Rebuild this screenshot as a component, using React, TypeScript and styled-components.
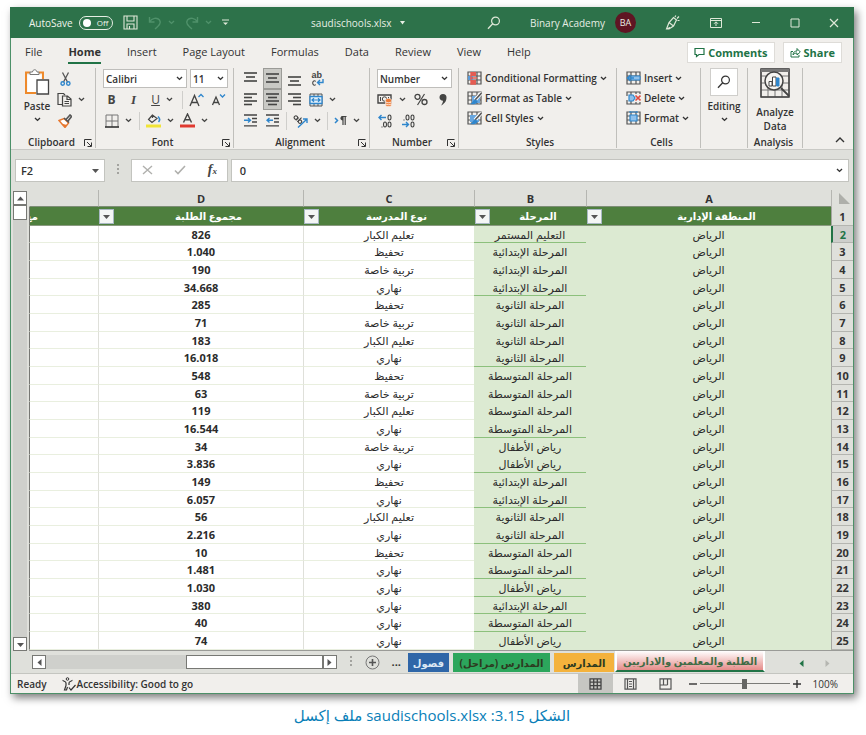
import React from "react";
import styled, { createGlobalStyle, css } from "styled-components";

const GlobalStyle = createGlobalStyle`
  * { box-sizing: border-box; }
  body { margin: 0; background: #fff; }
  body, button, input, select {
    font-family: "Open Sans", "Noto Sans", "DejaVu Sans", sans-serif;
    font-size: 11px;
    color: #333;
  }
  button, input, select { margin: 0; padding: 0; border: 0; background: none; outline: none; }
`;

const ink = "#444443";
const blue = "#2f86cc";
const green = "#217346";

/* ---------- page and window ---------- */

const Page = styled.main`
  padding: 7px 12px 4px 10px;
`;

const AppWindow = styled.section`
  border: 1px solid #4c9068;
  border-top: 0;
  background: #dfe0db;
  box-shadow: 3px 4px 8px rgba(0, 0, 0, 0.5);
`;

const Caption = styled.p`
  margin: 0;
  padding-top: 9px;
  text-align: center;
  font-size: 15px;
  line-height: 24px;
  font-weight: 500;
  color: #0a80b8;
`;

/* ---------- title bar ---------- */

const TitleBar = styled.header`
  display: flex;
  align-items: center;
  height: 31px;
  padding: 0 15px 0 19px;
  margin: 0 -1px;
  background: #2d724a;
  color: #e6eee4;
`;

const QuickAccess = styled.div`
  display: flex;
  align-items: center;
  gap: 10px;
  color: #e6eee4;
`;

const AutoSave = styled.button`
  display: flex;
  align-items: center;
  gap: 6px;
  font-size: 10px;
  font-weight: 500;
  color: #f0f4ec;
`;

const TogglePill = styled.span`
  display: flex;
  align-items: center;
  gap: 6px;
  height: 14px;
  width: 34px;
  padding-left: 3px;
  border: 1px solid #e6eee4;
  border-radius: 7px;
  font-size: 8px;

  &::before {
    content: "";
    width: 8px;
    height: 8px;
    border-radius: 50%;
    background: #fff;
  }
`;

const BarButton = styled.button<{ $dim?: boolean }>`
  display: flex;
  align-items: center;
  gap: 6px;
  color: ${(p) => (p.$dim ? "#4f916a" : "#dfe8d8")};
`;

const FileName = styled.button`
  flex: 1;
  display: flex;
  align-items: center;
  justify-content: center;
  gap: 8px;
  font-size: 10px;
  font-weight: 500;
  color: #e6eee4;
`;

const Account = styled.button`
  display: flex;
  align-items: center;
  gap: 10px;
  font-size: 10px;
  font-weight: 500;
  color: #e6eee4;
`;

const Avatar = styled.span`
  width: 21px;
  height: 21px;
  border-radius: 50%;
  background: #5f1523;
  font-size: 9px;
  line-height: 21px;
  text-align: center;
`;

const WindowTools = styled.div`
  display: flex;
  align-items: center;
  gap: 29px;
`;

/* ---------- ribbon ---------- */

const TabBar = styled.nav`
  display: flex;
  align-items: center;
  height: 28px;
  padding: 0 11px 0 14px;
  background: #f1efec;
`;

const Tab = styled.button<{ $active?: boolean }>`
  height: 24px;
  margin-right: 26px;
  border-bottom: 2px solid ${(p) => (p.$active ? green : "transparent")};
  font-weight: ${(p) => (p.$active ? 700 : 500)};
`;

const TabActions = styled.div`
  display: flex;
  gap: 8px;
  margin-left: auto;
`;

const ActionButton = styled.button`
  display: flex;
  align-items: center;
  gap: 3px;
  height: 21px;
  padding: 0 6px 0 6px;
  border: 1px solid #dedcd8;
  background: #fff;
  color: ${green};
  font-weight: 700;
`;

const Ribbon = styled.div`
  display: flex;
  align-items: flex-start;
  height: 84px;
  padding-top: 2px;
  border-bottom: 1px solid #c9c9c5;
  background: #f1efec;
`;

const Group = styled.section<{ $w: number; $pad?: number }>`
  display: flex;
  flex-direction: column;
  flex: 0 0 ${(p) => p.$w}px;
  height: 80px;
  padding-left: ${(p) => p.$pad ?? 8}px;
  border-right: 1px solid #c0bfbb;
`;

const GroupBody = styled.div`
  flex: 1;
  display: flex;
  align-items: flex-start;
`;

const GroupFooter = styled.footer`
  display: flex;
  align-items: center;
  justify-content: space-between;
  height: 12px;
  padding-right: 3px;
  font-size: 10px;
  font-weight: 600;
`;

const GroupName = styled.span`
  flex: 1;
  text-align: center;
`;

const Stack = styled.div`
  display: flex;
  flex-direction: column;
`;

const ToolRow = styled.div<{ $gap?: number }>`
  display: flex;
  align-items: center;
  gap: ${(p) => p.$gap ?? 4}px;
  height: 21px;
`;

const Tool = styled.button<{ $on?: boolean; $w?: number }>`
  display: flex;
  align-items: center;
  justify-content: center;
  gap: 6px;
  height: 21px;
  min-width: ${(p) => p.$w ?? 17}px;
  color: ${ink};
  ${(p) =>
    p.$on &&
    css`
      border: 1px solid #9b9b97;
      background: #c9c9c5;
    `}
`;

const Glyph = styled.span<{ $kind: "bold" | "italic" | "underline" }>`
  font-size: 12px;
  line-height: 16px;
  ${(p) => p.$kind === "bold" && "font-weight: 700;"}
  ${(p) => p.$kind === "italic" && 'font-style: italic; font-family: "Liberation Serif", serif; font-size: 13px; font-weight: 700;'}
  ${(p) => p.$kind === "underline" && "text-decoration: underline;"}
`;

const Divider = styled.i`
  width: 1px;
  height: 18px;
  background: #cfcecb;
`;

const BigTool = styled.button<{ $w?: number }>`
  display: flex;
  flex-direction: column;
  align-items: center;
  width: ${(p) => p.$w ?? 32}px;
  line-height: 14px;
  font-size: 10px;
  font-weight: 600;

  > :first-child { margin-bottom: 3px; }
  > :last-child:not(:first-child) { margin-top: 4px; }
`;

const IconFrame = styled.span`
  display: flex;
  align-items: center;
  justify-content: center;
  width: 28px;
  height: 28px;
  border: 1px solid #cfcecb;
  background: #fff;
`;

const TextTool = styled.button`
  display: flex;
  align-items: center;
  gap: 3px;
  height: 20px;
  font-size: 10px;
  font-weight: 600;
  white-space: nowrap;
`;

const SelectBox = styled.label<{ $w: number }>`
  position: relative;
  display: block;
  width: ${(p) => p.$w}px;
  height: 19px;
  border: 1px solid #bfbebb;
  background: #fff;

  select {
    width: 100%;
    height: 100%;
    padding-left: 2px;
    appearance: none;
    font-size: 10px;
    font-weight: 600;
  }
  svg {
    position: absolute;
    right: 3px;
    top: 6px;
    pointer-events: none;
  }
`;

const CollapseButton = styled.button`
  align-self: flex-end;
  margin: 0 8px 3px auto;
`;

/* ---------- formula bar ---------- */

const FormulaBar = styled.div`
  display: flex;
  align-items: center;
  height: 40px;
  padding: 0 4px;
`;

const Field = styled.label<{ $w?: number }>`
  display: flex;
  align-items: center;
  ${(p) => (p.$w ? `flex: 0 0 ${p.$w}px;` : "flex: 1;")}
  min-width: 0;
  height: 23px;
  padding: 0 5px;
  border: 1px solid #c3c4bf;
  background: #fff;

  input {
    flex: 1;
    width: 0;
    min-width: 0;
    font-weight: 600;
  }
`;

const FormulaTools = styled.div`
  display: flex;
  align-items: center;
  justify-content: space-between;
  flex: 0 0 97px;
  height: 23px;
  margin-right: 3px;
  padding: 0 10px;
  border: 1px solid #c3c4bf;
  background: #fff;
`;

const GripDots = styled.span<{ $gap: number }>`
  width: 2px;
  height: 12px;
  margin: 0 ${(p) => p.$gap}px;
  background: repeating-linear-gradient(#a3a39f 0 2px, transparent 2px 4px);
`;

/* ---------- sheet ---------- */

const SheetArea = styled.div`
  display: flex;
`;

const VerticalScroll = styled.div`
  display: flex;
  flex-direction: column;
  flex: 0 0 14px;
  margin: 1px 2px 0;
  background: #cfd0cc;
`;

const ScrollButton = styled.button`
  display: flex;
  align-items: center;
  justify-content: center;
  width: 14px;
  height: 14px;
  border: 1px solid #777874;
  background: #fff;
`;

const VerticalThumb = styled.div`
  width: 14px;
  height: 15px;
  margin-bottom: auto;
  border: 1px solid #777874;
  background: #fff;
`;

const Sheet = styled.table`
  flex: 1;
  width: 100%;
  table-layout: fixed;
  border-collapse: separate;
  border-spacing: 0;
  border-bottom: 1px solid #9a9b97;
  line-height: 15px;
  text-align: center;
`;

const LetterCell = styled.th`
  height: 17px;
  padding: 0;
  border-left: 1px solid #b5b6b1;
  border-bottom: 1px solid #7d8d76;
  font-size: 11px;
  font-weight: 700;

  &:last-child { border-left-color: transparent; }
`;

const Corner = styled.th`
  padding: 0 3px 0 0;
  border-left: 1px solid #b5b6b1;
  svg { display: block; }
`;

const HeadRow = styled.tr`
  height: 19px;
`;

const HeadCell = styled.th`
  padding: 0;
  border-bottom: 1px solid #8a9a80;
  background: #4e7f3e;
  font-size: 10px;
  color: #fff;
  overflow: hidden;
  white-space: nowrap;
  &:last-child { border-left: 1px solid #777874; }
`;

const HeadContent = styled.div<{ $cut?: boolean }>`
  display: flex;
  align-items: center;
  height: 17px;
  padding-left: 1px;
  ${(p) => p.$cut && "padding-right: 60px;"}

  span { flex: 1; }
`;

const FilterButton = styled.button`
  display: flex;
  align-items: center;
  justify-content: center;
  width: 15px;
  height: 15px;
  border: 1px solid #a9b8c4;
  background: #f4f6f5;
`;

const DataRow = styled.tr`
  height: 18px;
  &:nth-child(3n + 1) { height: 17px; }
`;

const RowNumber = styled.th<{ $selected?: boolean }>`
  padding: 0;
  border-left: 1px solid #a5a6a1;
  border-bottom: 1px solid #b4b5b0;
  font-size: 11px;
  font-weight: 700;
  color: #333;
  ${(p) =>
    p.$selected &&
    css`
      border-left: 2px solid ${green};
      background: #cdcecb;
      color: ${green};
    `}
`;

const Cell = styled.td<{ $tone?: "region" | "stage"; $rule?: boolean }>`
  padding: 0;
  border-left: 1px solid #dfe0da;
  border-bottom: 1px solid #e9efdf;
  background: #fff;
  color: #2b2b2b;
  overflow: hidden;
  white-space: nowrap;
  ${(p) =>
    p.$tone &&
    css`
      border-left: 0;
      border-bottom-color: ${p.$rule ? "#8cc07c" : "#dcead2"};
      background: #dcead2;
    `}
  &:last-child { border-left-color: #777874; }
`;

const NumberCell = styled(Cell)`
  font-weight: 700;
`;

/* ---------- bottom bars ---------- */

const SheetBar = styled.div`
  display: flex;
  align-items: center;
  height: 23px;
  padding-left: 21px;
  border-bottom: 1px solid #c4c5c0;
`;

const HorizontalScroll = styled.div`
  display: flex;
  flex: 1;
  justify-content: flex-end;
  height: 14px;
  background: #cfd0cc;

  > :first-child { margin-right: auto; }
`;

const HorizontalThumb = styled.div`
  width: 137px;
  border: 1px solid #777874;
  background: #fff;
`;

const AddSheet = styled.button`
  display: flex;
`;

const More = styled.span`
  margin: 0 7px 0 12px;
  font-weight: 700;
  line-height: 14px;
`;

const SheetTabs = styled.div`
  display: flex;
  align-self: stretch;
  align-items: flex-start;
`;

const SheetTab = styled.button<{ $w: number; $bg: string; $fg?: string; $active?: boolean }>`
  width: ${(p) => p.$w}px;
  height: 19px;
  margin-top: 2px;
  margin-right: 4px;
  white-space: nowrap;
  background: ${(p) => p.$bg};
  color: ${(p) => p.$fg ?? "#2d3a20"};
  font-size: 10px;
  font-weight: 700;

  &:nth-last-child(2) { margin-right: 1px; }
  ${(p) =>
    p.$active &&
    css`
      height: 21px;
      margin-top: 0;
      margin-right: 0;
      border: solid #fff;
      border-width: 0 2px;
      border-bottom: 2px solid ${green};
    `}
`;

const TabArrows = styled.div`
  display: flex;
  gap: 19px;
  margin: 0 22px 0 33px;
`;

const StatusBar = styled.footer`
  display: flex;
  align-items: center;
  height: 19px;
  padding: 0 15px 0 6px;
  background: #f1efec;
  font-size: 10px;
  font-weight: 600;
`;

const StatusButton = styled.button`
  display: flex;
  align-items: center;
  gap: 1px;
  margin-left: 15px;
  font-size: 10px;
  font-weight: 600;
`;

const ViewModes = styled.div`
  display: flex;
  align-self: stretch;
  margin-left: auto;
`;

const ViewMode = styled.button<{ $on?: boolean }>`
  display: flex;
  align-items: center;
  justify-content: center;
  width: 35px;
  background: ${(p) => (p.$on ? "#c6c6c2" : "transparent")};
`;

const ZoomControl = styled.div`
  display: flex;
  align-items: center;
  gap: 3px;
  margin-left: 6px;
  font-weight: 400;

  button { display: flex; }
`;

const ZoomSlider = styled.input`
  width: 90px;
  height: 12px;
  appearance: none;
  background: linear-gradient(#7b7b78, #7b7b78) center / 100% 1px no-repeat;

  &::-webkit-slider-thumb {
    appearance: none;
    width: 5px;
    height: 10px;
    background: #666663;
  }
`;

const ZoomValue = styled.output`
  margin-left: 9px;
`;

/* ---------- icons ---------- */

const Svg = ({ w, h, children }: { w: number; h: number; children: React.ReactNode }) => (
  <svg width={w} height={h} viewBox={`0 0 ${w} ${h}`} fill="none" stroke="currentColor" aria-hidden="true">
    {children}
  </svg>
);

const Chevron = () => (
  <Svg w={7} h={5}>
    <path d="M1 1l2.5 2.4L6 1" strokeWidth="1.4" />
  </Svg>
);

const Triangle = ({ dir = "down", color = "#555" }: { dir?: "down" | "up" | "left" | "right"; color?: string }) => {
  const d = {
    down: "M0 2h7L3.500 6z",
    up: "M0 5.500h7L3.500 1.500z",
    left: "M5.500 0v7L1.500 3.500z",
    right: "M1.500 0v7L5.500 3.500z",
  }[dir];
  return (
    <Svg w={7} h={7}>
      <path d={d} fill={color} stroke="none" />
    </Svg>
  );
};

const SmallTriangle = () => (
  <Svg w={5} h={4}>
    <path d="M0 0h5L2.500 3.500z" fill="currentColor" stroke="none" />
  </Svg>
);

const SaveIcon = () => (
  <Svg w={15} h={15}>
    <path d="M1 1h13v13H1zM4 1v5h7V1M4 14V9h7v5M6.500 11v3" strokeWidth="1.100" />
  </Svg>
);

const UndoIcon = ({ flip }: { flip?: boolean }) => (
  <Svg w={14} h={14}>
    <g transform={flip ? "translate(14 0) scale(-1 1)" : undefined} strokeWidth="1.400">
      <path d="M1.500 1v5h5M1.500 6C4 2 9 1 11.500 4c2 3 0 5-4.500 9" />
    </g>
  </Svg>
);

const CustomizeIcon = () => (
  <Svg w={7} h={7}>
    <path d="M0 1h7" />
    <path d="M1 3.500h5L3.500 6z" fill="currentColor" stroke="none" />
  </Svg>
);

const SearchIcon = () => (
  <Svg w={14} h={14}>
    <circle cx="8.500" cy="5" r="3.900" strokeWidth="1.200" />
    <path d="M5.700 7.800L1 12.800" strokeWidth="1.300" />
  </Svg>
);

const PenIcon = () => (
  <Svg w={16} h={16}>
    <path d="M1.500 14L4 7.500 8.500 2.500l3 2.500-3 6-4.500 3zM4 7.500l4.500 3.500M1.500 14l3.500-1.500M10 2l.8-1.500M12 3.500l2-2M12.500 5.500h2" strokeWidth="1.200" />
  </Svg>
);

const RibbonIcon = () => (
  <Svg w={12} h={10}>
    <path d="M.5.500h11v9H.500zM.5 2.500h11M6 8V4M4 5.800l2-2 2 2" />
  </Svg>
);

const MinimizeIcon = () => (
  <Svg w={10} h={10}>
    <path d="M1 4.500h8" />
  </Svg>
);

const MaximizeIcon = () => (
  <Svg w={10} h={10}>
    <path d="M1 1h8v8H1z" />
  </Svg>
);

const CloseIcon = () => (
  <Svg w={10} h={10}>
    <path d="M1 1l8 8M9 1L1 9" strokeWidth="1.200" />
  </Svg>
);

const CommentIcon = () => (
  <Svg w={11} h={11}>
    <path d="M1 1.500h9v6H5l-2.500 2v-2H1z" strokeWidth="1.200" />
  </Svg>
);

const ShareIcon = () => (
  <Svg w={11} h={11}>
    <path d="M3 4.500H1v5.500h8V8M3 8c0-3 2-4 4-4V1.500L10.300 5 7 8V6C5.500 6 4 6.500 3 8z" />
  </Svg>
);

const PasteIcon = () => (
  <Svg w={26} h={28}>
    <path d="M6 4.500H2V25h10M15 4.500h4V11" stroke="#ee8a2c" strokeWidth="2" />
    <path d="M6 6.500V4h2.500c.3-3 4-3 4.500 0H15v2.500z" stroke="#777" fill="#fff" />
    <path d="M3.500 7h14v5h-5v12h-9z" fill="#fff" stroke="none" />
    <path d="M13 12h11.500v14H13z" fill="#fff" stroke="#444" strokeWidth="1.300" />
  </Svg>
);

const CutIcon = () => (
  <Svg w={11} h={14}>
    <path d="M2.500.500L7.500 10M8.500.500L3.500 10" stroke="#555" strokeWidth="1.300" />
    <circle cx="2.700" cy="11.500" r="1.700" stroke={blue} strokeWidth="1.400" />
    <circle cx="8.300" cy="11.500" r="1.700" stroke={blue} strokeWidth="1.400" />
  </Svg>
);

const CopyIcon = () => (
  <Svg w={15} h={15}>
    <path d="M5 12.500H1v-11h5.500l1.500 1.500" strokeWidth="1.200" />
    <path d="M5.500 4h5L14 7v7H5.500zM10 4v3.500h4M7.500 9.500h4.500M7.500 11.500h4.500" strokeWidth="1.200" />
  </Svg>
);

const BrushIcon = () => (
  <Svg w={14} h={14}>
    <path d="M1 6.500l5-2 4.500 4.500-3.500 4.500z" fill="#fff" stroke="#e8772e" strokeWidth="1.400" />
    <path d="M3 9.500l4 3.500 2-2z" fill="#e8772e" stroke="none" />
    <path d="M6 4l5 4.500M8 5.500L12 1l1.500 1.500L10 7" stroke="#555" strokeWidth="1.600" />
  </Svg>
);

const BordersIcon = () => (
  <Svg w={14} h={14}>
    <path d="M1 1h12v12M1 1v12M7 1v12M1 7h12" stroke="#777" />
    <path d="M0 13h14" stroke="#333" strokeWidth="1.600" />
  </Svg>
);

const FillIcon = () => (
  <Svg w={15} h={15}>
    <path d="M6.500 2L2.500 6.500 6 9.500l5-4zM6.500 5V1.500" strokeWidth="1.200" />
    <path d="M12 3.500c2 2 2 4 .5 5.500" stroke={blue} strokeWidth="1.600" />
    <path d="M0 11.500h15v3H0z" fill="#f0e436" stroke="none" />
  </Svg>
);

const FontColorIcon = () => (
  <Svg w={15} h={15}>
    <path d="M3.500 9.500L7.500 1l4 8.500M5 6.800h5" strokeWidth="1.400" />
    <path d="M0 11.500h15v3H0z" fill="#e03a30" stroke="none" />
  </Svg>
);

const GrowIcon = ({ down }: { down?: boolean }) => (
  <Svg w={15} h={14}>
    <path d={down ? "M1.500 12L5 4l3.500 8M2.700 9.500h4.600" : "M1 13L5.500 2.500 10 13M2.500 9.500h6"} strokeWidth="1.300" />
    <path d={down ? "M9 1.500l2.500 2.500L14 1.500" : "M9.500 4L12 1.500 14.500 4"} stroke={blue} strokeWidth="1.300" />
  </Svg>
);

const lineSets = {
  top: { y: 1, w: [[0, 13], [2, 9], [0, 13]] },
  middle: { y: 2, w: [[0, 13], [2, 9], [0, 13]] },
  bottom: { y: 5, w: [[0, 13], [2, 9], [0, 13]] },
  left: { y: 1, w: [[0, 13], [0, 8], [0, 13], [0, 8]] },
  center: { y: 1, w: [[0, 13], [2, 9], [0, 13], [2, 9]] },
  right: { y: 1, w: [[0, 13], [5, 8], [0, 13], [5, 8]] },
};

const LinesIcon = ({ kind }: { kind: keyof typeof lineSets }) => (
  <Svg w={13} h={14}>
    {lineSets[kind].w.map(([x, w], i) => (
      <path key={i} d={`M${x} ${lineSets[kind].y + i * (lineSets[kind].w.length === 3 ? 4 : 3.500)}h${w}`} strokeWidth="1.600" />
    ))}
  </Svg>
);

const IndentIcon = ({ back }: { back?: boolean }) => (
  <Svg w={13} h={13}>
    <path d="M0 1h13M8 4.500h5M8 8h5M0 11.800h13" strokeWidth="1.300" />
    <path d={back ? "M7 6.300H1M3.500 4L1 6.300l2.500 2.300" : "M0 6.300h6M4 4l2.500 2.300L4 8.600"} stroke={blue} strokeWidth="1.400" />
  </Svg>
);

const WrapMark = styled.span`
  display: grid;
  grid-template-columns: auto auto;
  align-items: center;
  width: 13px;
  font: 600 9px/8px "Liberation Sans", sans-serif;
  text-align: left;

  b { grid-column: 1 / -1; font-weight: 600; }
`;

const WrapIcon = () => (
  <WrapMark>
    <b>ab</b>
    <Svg w={4} h={8}>
      <path d="M3.800 2.500C2.500 1 .700 2 .700 4s1.800 3 3.100 1.500" strokeWidth="1.100" />
    </Svg>
    <Svg w={8} h={8}>
      <path d="M7 0v3.500H1.500M4 1L1.500 3.500 4 6" stroke={blue} strokeWidth="1.400" />
    </Svg>
  </WrapMark>
);

const MergeIcon = () => (
  <Svg w={14} h={14}>
    <path d="M1 1h12v12H1zM5 1v3M9 1v3M5 10v3M9 10v3" stroke="#555" />
    <path d="M1 3.500h12v7H1z" fill="#e4f0fa" stroke={blue} strokeWidth="1.300" />
    <path d="M3 7h8M5 5.300L3 7l2 1.700M9 5.300L11 7 9 8.700" stroke={blue} strokeWidth="1.200" />
  </Svg>
);

const RotateIcon = () => (
  <Svg w={15} h={14}>
    <g transform="rotate(45 5 5)" strokeWidth="1.100">
      <circle cx="2.500" cy="5.500" r="1.700" />
      <path d="M4.400 3.500v4M6.500 1.500v6" />
      <circle cx="8.300" cy="5.500" r="1.700" />
    </g>
    <path d="M5 13.500l8.500-8M10 5h4v4" stroke={blue} strokeWidth="1.400" />
  </Svg>
);

const DirectionIcon = () => (
  <Svg w={13} h={11}>
    <path d="M1 3l2.500 2.500L1 8" stroke={blue} strokeWidth="1.500" />
    <path d="M12.500 1.500H7.500M9 1.500V10M11.200 1.500V10" strokeWidth="1.200" />
    <path d="M9 1C5.500 1 5.500 5.500 9 5.500z" fill="currentColor" stroke="none" />
  </Svg>
);

const MoneyIcon = () => (
  <Svg w={16} h={14}>
    <path d="M1 2h13v8H1z" strokeWidth="1.400" />
    <circle cx="7.500" cy="6" r="2.200" />
    <path d="M3.500 4v4M11.500 4v2" />
    <path d="M8.500 7c0-2 6-2 6 0v5c0 2-6 2-6 0z" fill="#ee7a35" stroke="#fff" strokeWidth=".6" />
    <path d="M9 9c1 1 4 1 5 0M9 11c1 1 4 1 5 0" stroke="#fff" strokeWidth=".8" />
  </Svg>
);

const PercentIcon = () => (
  <Svg w={14} h={13}>
    <circle cx="3.500" cy="3.800" r="2.500" strokeWidth="1.300" />
    <circle cx="10.500" cy="9" r="2.500" strokeWidth="1.300" />
    <path d="M10.500 1L3.500 12" strokeWidth="1.200" />
  </Svg>
);

const CommaIcon = () => (
  <Svg w={8} h={12}>
    <path d="M.5 3.500a3.300 3.300 0 0 1 7 0c0 4-2.500 6.500-5.500 8 1-1.500 2-3 2-4.800-2 0-3.500-1.200-3.500-3.200z" fill="currentColor" stroke="none" />
  </Svg>
);

const DecimalIcon = ({ less }: { less?: boolean }) => (
  <Svg w={15} h={14}>
    <g strokeWidth="1.100">
      {less && <ellipse cx="6.500" cy="3.500" rx="1.500" ry="2.500" />}
      <ellipse cx="11.500" cy="3.500" rx="1.500" ry="2.500" />
      {!less && <ellipse cx="7" cy="10.500" rx="1.500" ry="2.500" />}
      <ellipse cx="11.500" cy="10.500" rx="1.500" ry="2.500" />
      <path d={less ? "M3 5.500v1" : "M4 12.500v1"} />
    </g>
    <path d={less ? "M1 10.500h6.500M5 8l2.500 2.500L5 13" : "M8 3.500H1M3.500 1L1 3.500 3.500 6"} stroke={blue} strokeWidth="1.400" />
  </Svg>
);

const GridBase = () => <path d="M1 1h13v12H1zM1 5h13M1 9h13M5 1v12M10 1v12" stroke="#555" strokeWidth="1.200" />;

const CondIcon = () => (
  <Svg w={15} h={14}>
    <GridBase />
    <path d="M4 1h5v4H4zM4 9h5v4H4z" fill="#e45c52" stroke="none" />
    <path d="M1 5h5v4H1z" fill="#5b9bd8" stroke="none" />
    <path d="M4 7h6M4 1v12h5" stroke="#e45c52" strokeWidth="1.400" />
  </Svg>
);

const PaintOverlay = () => (
  <>
    <path d="M14.500 2L8 9" stroke="#fff" strokeWidth="3.500" />
    <path d="M14.500 2L8 9" stroke="#555" strokeWidth="1.600" />
    <path d="M9 8.500c-3 0-3 3-6 4.500 4 .6 8 0 7.500-3z" fill={blue} stroke="none" />
  </>
);

const TableFormatIcon = () => (
  <Svg w={15} h={14}>
    <GridBase />
    <path d="M5 5h8v7H5z" fill="#68a6df" stroke="none" />
    <PaintOverlay />
  </Svg>
);

const CellStyleIcon = () => (
  <Svg w={15} h={14}>
    <GridBase />
    <path d="M3 4h9v7H3z" fill="#68a6df" stroke="none" />
    <PaintOverlay />
  </Svg>
);

const InsertIcon = () => (
  <Svg w={15} h={14}>
    <GridBase />
    <path d="M5 5h9v4H5z" fill="#8fc0ea" stroke={blue} />
    <path d="M8 7H1.500M4.500 4L1.500 7l3 3" stroke={blue} strokeWidth="1.500" />
  </Svg>
);

const DeleteIcon = () => (
  <Svg w={15} h={14}>
    <path d="M1 5V1h13v2M1 9v4h13v-2M5 1v3M10 1v2M5 10v3M10 11v2" stroke="#555" strokeWidth="1.200" />
    <path d="M3 4h4l2 3-2 3H3z" fill="#8fc0ea" stroke={blue} strokeWidth="1.200" />
    <path d="M9.500 4.500l5 5M14.500 4.500l-5 5" stroke="#e04a40" strokeWidth="1.600" />
  </Svg>
);

const FormatIcon = () => (
  <Svg w={15} h={14}>
    <GridBase />
    <path d="M4 4h7v6H4z" fill="#8fc0ea" stroke={blue} strokeWidth="1.200" />
    <path d="M4 0v2M11 0v2M4 1h7" stroke={blue} />
  </Svg>
);

const AnalyzeIcon = () => (
  <Svg w={30} h={30}>
    <path d="M1 1h28v28H1zM1 8h28M1 15h28M1 22h28M8 8v21M15 8v21M22 8v21" stroke="#777" />
    <path d="M1 1h28v28H1z" stroke="#444" strokeWidth="1.500" />
    <path d="M1 1h28v3H1z" fill="#777" stroke="none" />
    <circle cx="14" cy="13" r="9" fill="#f6f5f2" stroke="#444" strokeWidth="1.500" />
    <path d="M9 13.500h3V18H9zM12.500 9h3.500v9h-3.500z" fill="#fff" stroke="#444" />
    <path d="M16.500 10h2.500v8h-2.500z" fill={blue} stroke={blue} />
    <path d="M21 20l8 8" stroke="#444" strokeWidth="1.800" />
  </Svg>
);

const LauncherIcon = () => (
  <Svg w={8} h={8}>
    <path d="M.5 7V.500h7M3 3l4 4M7.500 3.500v4h-4" />
  </Svg>
);

const CollapseIcon = () => (
  <Svg w={10} h={6}>
    <path d="M1 5l4-4 4 4" strokeWidth="1.400" />
  </Svg>
);

const CancelIcon = () => (
  <Svg w={11} h={10}>
    <path d="M1 1l9 8M10 1L1 9" stroke="#b0b0ad" strokeWidth="1.400" />
  </Svg>
);

const CheckIcon = () => (
  <Svg w={12} h={10}>
    <path d="M1 5.500l3 3L11 1" stroke="#b0b0ad" strokeWidth="1.600" />
  </Svg>
);

const FxLabel = styled.span`
  font: italic 700 14px/16px "Liberation Serif", serif;
  color: #444;
  small { font-size: 9px; }
`;

const AddIcon = () => (
  <Svg w={15} h={15}>
    <circle cx="7.500" cy="7.500" r="6.500" stroke="#777" />
    <path d="M7.500 4v7M4 7.500h7" stroke="#555" strokeWidth="1.600" />
  </Svg>
);

const AccessibilityIcon = () => (
  <Svg w={14} h={14}>
    <circle cx="5.500" cy="2" r="1.300" />
    <path d="M1 3c-.5 1.500 3 1 3 3v2.500L2.500 13h2L5.500 10M10 3c.5 1.500-3 1-3 3v2M7 10.500l2 2.500 4.500-5" strokeWidth="1.200" />
  </Svg>
);

const NormalViewIcon = () => (
  <Svg w={13} h={12}>
    <path d="M1 .800h11v10.400H1zM1 4.200h11M1 7.700h11M4.700 1v10M8.300 1v10" stroke="#444" strokeWidth="1.300" />
  </Svg>
);

const PageViewIcon = () => (
  <Svg w={13} h={12}>
    <path d="M1 .800h11v10.400H1zM3.500 1v10M9.500 1v10M5 3.500h3M5 6h3M5 8.500h3" stroke="#555" strokeWidth="1.200" />
  </Svg>
);

const BreakViewIcon = () => (
  <Svg w={13} h={12}>
    <path d="M1 .800h11v10.400H1zM4.500 1v6M8.500 1v6M1 7h7.500" stroke="#555" strokeWidth="1.200" />
  </Svg>
);

/* ---------- data ---------- */

const primary = "المرحلة الإبتدائية";
const secondary = "المرحلة الثانوية";
const middle = "المرحلة المتوسطة";
const kinder = "رياض الأطفال";
const day = "نهاري";
const memorize = "تحفيظ";
const special = "تربية خاصة";
const adults = "تعليم الكبار";

const records: [string, string, string][] = [
  ["التعليم المستمر", adults, "826"],
  [primary, memorize, "1.040"],
  [primary, special, "190"],
  [primary, day, "34.668"],
  [secondary, memorize, "285"],
  [secondary, special, "71"],
  [secondary, adults, "183"],
  [secondary, day, "16.018"],
  [middle, memorize, "548"],
  [middle, special, "63"],
  [middle, adults, "119"],
  [middle, day, "16.544"],
  [kinder, special, "34"],
  [kinder, day, "3.836"],
  [primary, memorize, "149"],
  [primary, day, "6.057"],
  [secondary, adults, "56"],
  [secondary, day, "2.216"],
  [middle, memorize, "10"],
  [middle, day, "1.481"],
  [kinder, day, "1.030"],
  [primary, day, "380"],
  [middle, day, "40"],
  [kinder, day, "74"],
];

const headings = ["المنطقة الإدارية", "المرحلة", "نوع المدرسة", "مجموع الطلبة"];
const tabs = ["File", "Home", "Insert", "Page Layout", "Formulas", "Data", "Review", "View", "Help"];

const Footer = ({ name, launcher }: { name: string; launcher?: boolean }) => (
  <GroupFooter>
    <GroupName>{name}</GroupName>
    {launcher && (
      <button aria-label={`${name} settings`}>
        <LauncherIcon />
      </button>
    )}
  </GroupFooter>
);

const Dropdown = ({ label, value, w }: { label: string; value: string; w: number }) => (
  <SelectBox $w={w}>
    <select aria-label={label} defaultValue={value}>
      <option>{value}</option>
    </select>
    <Chevron />
  </SelectBox>
);

export default function App() {
  return (
    <Page>
      <GlobalStyle />
      <AppWindow>
        <TitleBar>
          <QuickAccess>
            <AutoSave role="switch" aria-checked="false">
              AutoSave
              <TogglePill>Off</TogglePill>
            </AutoSave>
            <BarButton aria-label="Save"><SaveIcon /></BarButton>
            <BarButton $dim aria-label="Undo"><UndoIcon /><Chevron /></BarButton>
            <BarButton $dim aria-label="Redo"><UndoIcon flip /><Chevron /></BarButton>
            <BarButton aria-label="Customize toolbar"><CustomizeIcon /></BarButton>
          </QuickAccess>
          <FileName>
            saudischools.xlsx
            <SmallTriangle />
          </FileName>
          <WindowTools>
            <BarButton aria-label="Search"><SearchIcon /></BarButton>
            <Account>
              Binary Academy
              <Avatar>BA</Avatar>
            </Account>
            <BarButton aria-label="Drawing"><PenIcon /></BarButton>
            <BarButton aria-label="Ribbon display"><RibbonIcon /></BarButton>
            <BarButton aria-label="Minimize"><MinimizeIcon /></BarButton>
            <BarButton aria-label="Maximize"><MaximizeIcon /></BarButton>
            <BarButton aria-label="Close"><CloseIcon /></BarButton>
          </WindowTools>
        </TitleBar>

        <TabBar>
          {tabs.map((t) => (
            <Tab key={t} $active={t === "Home"}>{t}</Tab>
          ))}
          <TabActions>
            <ActionButton><CommentIcon />Comments</ActionButton>
            <ActionButton><ShareIcon />Share</ActionButton>
          </TabActions>
        </TabBar>

        <Ribbon>
          <Group $w={85}>
            <GroupBody>
              <BigTool $w={36}><PasteIcon />Paste<Chevron /></BigTool>
              <Stack>
                <ToolRow><Tool $w={20} aria-label="Cut"><CutIcon /></Tool></ToolRow>
                <ToolRow><Tool $w={32} aria-label="Copy"><CopyIcon /><Chevron /></Tool></ToolRow>
                <ToolRow><Tool $w={20} aria-label="Format painter"><BrushIcon /></Tool></ToolRow>
              </Stack>
            </GroupBody>
            <Footer name="Clipboard" launcher />
          </Group>

          <Group $w={138} $pad={7}>
            <GroupBody>
              <Stack>
                <ToolRow $gap={3}>
                  <Dropdown label="Font" value="Calibri" w={84} />
                  <Dropdown label="Font size" value="11" w={38} />
                </ToolRow>
                <ToolRow $gap={5}>
                  <Tool aria-label="Bold"><Glyph $kind="bold">B</Glyph></Tool>
                  <Tool aria-label="Italic"><Glyph $kind="italic">I</Glyph></Tool>
                  <Tool $w={30} aria-label="Underline"><Glyph $kind="underline">U</Glyph><Chevron /></Tool>
                  <Divider />
                  <Tool aria-label="Grow font"><GrowIcon /></Tool>
                  <Tool aria-label="Shrink font"><GrowIcon down /></Tool>
                </ToolRow>
                <ToolRow $gap={6}>
                  <Tool $w={30} aria-label="Borders"><BordersIcon /><Chevron /></Tool>
                  <Divider />
                  <Tool $w={28} aria-label="Fill color"><FillIcon /><Chevron /></Tool>
                  <Tool $w={28} aria-label="Font color"><FontColorIcon /><Chevron /></Tool>
                </ToolRow>
              </Stack>
            </GroupBody>
            <Footer name="Font" launcher />
          </Group>

          <Group $w={136}>
            <GroupBody>
              <Stack>
                <ToolRow>
                  <Tool aria-label="Top align"><LinesIcon kind="top" /></Tool>
                  <Tool $on $w={19} aria-label="Middle align"><LinesIcon kind="middle" /></Tool>
                  <Tool aria-label="Bottom align"><LinesIcon kind="bottom" /></Tool>
                  <Tool $w={22} aria-label="Wrap text"><WrapIcon /></Tool>
                </ToolRow>
                <ToolRow>
                  <Tool aria-label="Align left"><LinesIcon kind="left" /></Tool>
                  <Tool $on $w={19} aria-label="Center"><LinesIcon kind="center" /></Tool>
                  <Tool aria-label="Align right"><LinesIcon kind="right" /></Tool>
                  <Tool $w={30} aria-label="Merge"><MergeIcon /><Chevron /></Tool>
                </ToolRow>
                <ToolRow>
                  <Tool aria-label="Increase indent"><IndentIcon /></Tool>
                  <Tool $w={19} aria-label="Decrease indent"><IndentIcon back /></Tool>
                  <Divider />
                  <Tool $w={32} aria-label="Orientation"><RotateIcon /><Chevron /></Tool>
                  <Divider />
                  <Tool $w={30} aria-label="Text direction"><DirectionIcon /><Chevron /></Tool>
                </ToolRow>
              </Stack>
            </GroupBody>
            <Footer name="Alignment" launcher />
          </Group>

          <Group $w={89} $pad={7}>
            <GroupBody>
              <Stack>
                <ToolRow><Dropdown label="Number format" value="Number" w={75} /></ToolRow>
                <ToolRow $gap={8}>
                  <Tool $w={29} aria-label="Currency"><MoneyIcon /><Chevron /></Tool>
                  <Tool $w={14} aria-label="Percent"><PercentIcon /></Tool>
                  <Tool $w={14} aria-label="Comma style"><CommaIcon /></Tool>
                </ToolRow>
                <ToolRow>
                  <Tool aria-label="Increase decimal"><DecimalIcon /></Tool>
                  <Tool $w={20} aria-label="Decrease decimal"><DecimalIcon less /></Tool>
                </ToolRow>
              </Stack>
            </GroupBody>
            <Footer name="Number" launcher />
          </Group>

          <Group $w={158} $pad={8}>
            <GroupBody>
              <Stack>
                <TextTool><CondIcon />Conditional Formatting <Chevron /></TextTool>
                <TextTool><TableFormatIcon />Format as Table <Chevron /></TextTool>
                <TextTool><CellStyleIcon />Cell Styles <Chevron /></TextTool>
              </Stack>
            </GroupBody>
            <Footer name="Styles" />
          </Group>

          <Group $w={84} $pad={9}>
            <GroupBody>
              <Stack>
                <TextTool><InsertIcon />Insert <Chevron /></TextTool>
                <TextTool><DeleteIcon />Delete <Chevron /></TextTool>
                <TextTool><FormatIcon />Format <Chevron /></TextTool>
              </Stack>
            </GroupBody>
            <Footer name="Cells" />
          </Group>

          <Group $w={47} $pad={0}>
            <GroupBody>
              <BigTool $w={46}><IconFrame><SearchIcon /></IconFrame>Editing<Chevron /></BigTool>
            </GroupBody>
          </Group>

          <Group $w={55} $pad={0}>
            <GroupBody>
              <BigTool $w={54}><AnalyzeIcon /><span>Analyze Data</span></BigTool>
            </GroupBody>
            <Footer name="Analysis" />
          </Group>

          <CollapseButton aria-label="Collapse ribbon"><CollapseIcon /></CollapseButton>
        </Ribbon>

        <FormulaBar>
          <Field $w={90}>
            <input aria-label="Name box" defaultValue="F2" />
            <Triangle />
          </Field>
          <GripDots $gap={12} />
          <FormulaTools>
            <button aria-label="Cancel"><CancelIcon /></button>
            <button aria-label="Enter"><CheckIcon /></button>
            <button aria-label="Insert function"><FxLabel>f<small>x</small></FxLabel></button>
          </FormulaTools>
          <Field>
            <input aria-label="Formula" defaultValue=" 0" />
            <Chevron />
          </Field>
        </FormulaBar>

        <SheetArea>
          <VerticalScroll>
            <ScrollButton aria-label="Scroll up"><Triangle dir="up" /></ScrollButton>
            <VerticalThumb />
            <ScrollButton aria-label="Scroll down"><Triangle /></ScrollButton>
          </VerticalScroll>
          <Sheet dir="rtl">
            <colgroup>
              <col width="22" />
              <col width="245" />
              <col width="112" />
              <col width="171" />
              <col width="205" />
              <col width="69" />
            </colgroup>
            <thead>
              <tr>
                <Corner>
                  <Svg w={11} h={11}><path d="M0 0v11h11z" fill="#aeafaa" stroke="none" /></Svg>
                </Corner>
                <LetterCell>A</LetterCell>
                <LetterCell>B</LetterCell>
                <LetterCell>C</LetterCell>
                <LetterCell>D</LetterCell>
                <LetterCell />
              </tr>
              <HeadRow>
                <RowNumber>1</RowNumber>
                {headings.map((h) => (
                  <HeadCell key={h}>
                    <HeadContent>
                      <span>{h}</span>
                      <FilterButton aria-label={`Filter ${h}`}><Triangle /></FilterButton>
                    </HeadContent>
                  </HeadCell>
                ))}
                <HeadCell><HeadContent $cut>مع</HeadContent></HeadCell>
              </HeadRow>
            </thead>
            <tbody>
              {records.map(([stage, kind, total], i) => (
                <DataRow key={i}>
                  <RowNumber $selected={i === 0}>{i + 2}</RowNumber>
                  <Cell $tone="region">الرياض</Cell>
                  <Cell $tone="stage" $rule={i + 1 < records.length && records[i + 1][0] !== stage}>{stage}</Cell>
                  <Cell>{kind}</Cell>
                  <NumberCell>{total}</NumberCell>
                  <Cell />
                </DataRow>
              ))}
            </tbody>
          </Sheet>
        </SheetArea>

        <SheetBar>
          <HorizontalScroll>
            <ScrollButton aria-label="Scroll left"><Triangle dir="left" /></ScrollButton>
            <HorizontalThumb />
            <ScrollButton aria-label="Scroll right"><Triangle dir="right" /></ScrollButton>
          </HorizontalScroll>
          <GripDots $gap={13} />
          <AddSheet aria-label="New sheet"><AddIcon /></AddSheet>
          <More>...</More>
          <SheetTabs>
            <SheetTab $w={41} $bg="#2f66a8" $fg="#dce8f4">فصول</SheetTab>
            <SheetTab $w={97} $bg="#2ca65c">المدارس (مراحل)</SheetTab>
            <SheetTab $w={60} $bg="#f4b23c">المدارس</SheetTab>
            <SheetTab $w={150} $bg="linear-gradient(#fff, #e58c89)" $fg="#3f6b45" $active>
              الطلبة والمعلمين والاداريين
            </SheetTab>
          </SheetTabs>
          <TabArrows>
            <button aria-label="Previous sheet"><Triangle dir="left" color={green} /></button>
            <button aria-label="Next sheet"><Triangle dir="right" color="#b5b6b1" /></button>
          </TabArrows>
        </SheetBar>

        <StatusBar>
          <span>Ready</span>
          <StatusButton><AccessibilityIcon />Accessibility: Good to go</StatusButton>
          <ViewModes>
            <ViewMode $on aria-label="Normal view"><NormalViewIcon /></ViewMode>
            <ViewMode aria-label="Page layout view"><PageViewIcon /></ViewMode>
            <ViewMode aria-label="Page break view"><BreakViewIcon /></ViewMode>
          </ViewModes>
          <ZoomControl>
            <button aria-label="Zoom out"><Svg w={8} h={8}><path d="M0 4h8" strokeWidth="1.400" /></Svg></button>
            <ZoomSlider type="range" aria-label="Zoom" defaultValue={50} />
            <button aria-label="Zoom in"><Svg w={8} h={8}><path d="M0 4h8M4 0v8" strokeWidth="1.400" /></Svg></button>
            <ZoomValue>100%</ZoomValue>
          </ZoomControl>
        </StatusBar>
      </AppWindow>
      <Caption dir="rtl">الشكل 3.15: saudischools.xlsx ملف إكسل</Caption>
    </Page>
  );
}
